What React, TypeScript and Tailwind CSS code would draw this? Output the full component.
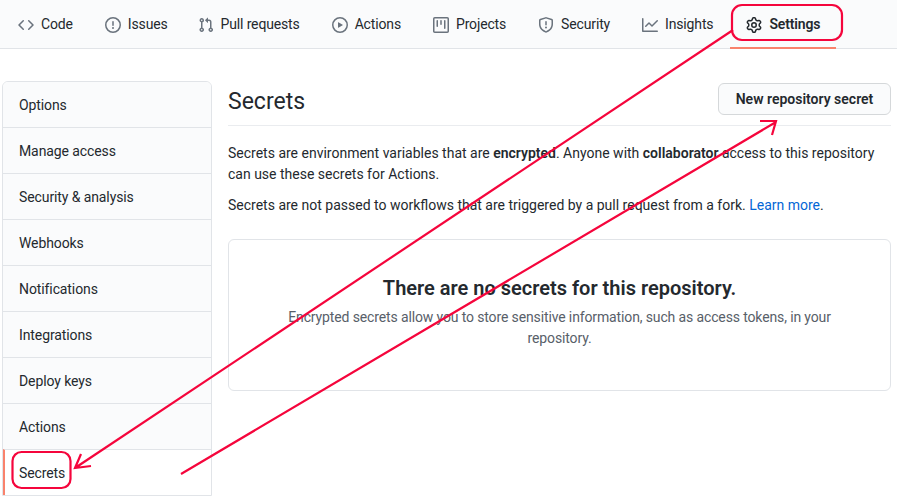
import React from 'react';

const paths: Record<string, string> = {
  code: 'M4.72 3.22a.75.75 0 011.06 1.06L2.06 8l3.72 3.72a.75.75 0 11-1.06 1.06L.47 8.53a.75.75 0 010-1.06l4.25-4.25zm6.56 0a.75.75 0 10-1.06 1.06L13.94 8l-3.72 3.72a.75.75 0 101.06 1.06l4.25-4.25a.75.75 0 000-1.06l-4.25-4.25z',
  issue: 'M8 1.5a6.5 6.5 0 100 13 6.5 6.5 0 000-13zM0 8a8 8 0 1116 0A8 8 0 010 8zm9 3a1 1 0 11-2 0 1 1 0 012 0zm-.25-6.25a.75.75 0 00-1.5 0v3.5a.75.75 0 001.5 0v-3.5z',
  pr: 'M7.177 3.073L9.573.677A.25.25 0 0110 .854v4.792a.25.25 0 01-.427.177L7.177 3.427a.25.25 0 010-.354zM3.75 2.5a.75.75 0 100 1.5.75.75 0 000-1.5zm-2.25.75a2.25 2.25 0 113 2.122v5.256a2.251 2.251 0 11-1.5 0V5.372A2.25 2.25 0 011.5 3.25zM11 2.5h-1V4h1a1 1 0 011 1v5.628a2.251 2.251 0 101.5 0V5A2.5 2.5 0 0011 2.5zm1 10.25a.75.75 0 111.5 0 .75.75 0 01-1.5 0zM3.75 12a.75.75 0 100 1.5.75.75 0 000-1.5z',
  play: 'M1.5 8a6.5 6.5 0 1113 0 6.5 6.5 0 01-13 0zM8 0a8 8 0 100 16A8 8 0 008 0zM6.379 5.227A.25.25 0 006 5.442v5.117a.25.25 0 00.379.214l4.264-2.559a.25.25 0 000-.428L6.379 5.227z',
  project: 'M1.75 0A1.75 1.75 0 000 1.75v12.5C0 15.216.784 16 1.75 16h12.5A1.75 1.75 0 0016 14.25V1.75A1.75 1.75 0 0014.25 0H1.75zM1.5 1.75a.25.25 0 01.25-.25h12.5a.25.25 0 01.25.25v12.5a.25.25 0 01-.25.25H1.75a.25.25 0 01-.25-.25V1.75zM11.75 3a.75.75 0 00-.75.75v7.5a.75.75 0 001.5 0v-7.5a.75.75 0 00-.75-.75zm-8.25.75a.75.75 0 011.5 0v5.5a.75.75 0 01-1.5 0v-5.5zM8 3a.75.75 0 00-.75.75v3.5a.75.75 0 001.5 0v-3.5A.75.75 0 008 3z',
  shield: 'M7.467.133a1.75 1.75 0 011.066 0l5.25 1.68A1.75 1.75 0 0115 3.48V7c0 1.566-.32 3.182-1.303 4.682-.983 1.498-2.585 2.813-5.032 3.855a1.7 1.7 0 01-1.33 0c-2.447-1.042-4.049-2.357-5.032-3.855C1.32 10.182 1 8.566 1 7V3.48a1.75 1.75 0 011.217-1.667l5.25-1.68zm.61 1.429a.25.25 0 00-.153 0l-5.25 1.68a.25.25 0 00-.174.238V7c0 1.358.275 2.666 1.057 3.86.784 1.194 2.121 2.34 4.366 3.297a.2.2 0 00.154 0c2.245-.956 3.582-2.104 4.366-3.298C13.225 9.666 13.5 8.36 13.5 7V3.48a.25.25 0 00-.174-.237l-5.25-1.68zM9 10.5a1 1 0 11-2 0 1 1 0 012 0zm-.25-5.75a.75.75 0 10-1.5 0v3a.75.75 0 001.5 0v-3z',
  graph: 'M1.5 1.75a.75.75 0 00-1.5 0v12.5c0 .414.336.75.75.75h14.5a.75.75 0 000-1.5H1.5V1.75zm14.28 2.53a.75.75 0 00-1.06-1.06L10 7.94 7.53 5.47a.75.75 0 00-1.06 0L3.22 8.72a.75.75 0 001.06 1.06L7 7.06l2.47 2.47a.75.75 0 001.06 0l5.25-5.25z',
  gear: 'M7.429 1.525a6.593 6.593 0 011.142 0c.036.003.108.036.137.146l.289 1.105c.147.56.55.967.997 1.189.174.086.341.183.501.29.417.278.97.423 1.53.27l1.102-.303c.11-.03.175.016.195.046.219.31.41.641.573.989.014.031.022.11-.059.19l-.815.806c-.411.406-.562.957-.53 1.456a4.588 4.588 0 010 .582c-.032.499.119 1.05.53 1.456l.815.806c.08.08.073.159.059.19a6.494 6.494 0 01-.573.99c-.02.029-.086.074-.195.045l-1.103-.303c-.559-.153-1.112-.008-1.529.27-.16.107-.327.204-.5.29-.449.222-.851.628-.998 1.189l-.289 1.105c-.029.11-.101.143-.137.146a6.613 6.613 0 01-1.142 0c-.036-.003-.108-.037-.137-.146l-.289-1.105c-.147-.56-.55-.967-.997-1.189a4.502 4.502 0 01-.501-.29c-.417-.278-.97-.423-1.53-.27l-1.102.303c-.11.03-.175-.016-.195-.046a6.492 6.492 0 01-.573-.989c-.014-.031-.022-.11.059-.19l.815-.806c.411-.406.562-.957.53-1.456a4.587 4.587 0 010-.582c.032-.499-.119-1.05-.53-1.456l-.815-.806c-.08-.08-.073-.159-.059-.19a6.44 6.44 0 01.573-.99c.02-.029.086-.075.195-.045l1.103.303c.559.153 1.112.008 1.529-.27.16-.107.327-.204.5-.29.449-.222.851-.628.998-1.189l.289-1.105c.029-.11.101-.143.137-.146zM8 0c-.236 0-.47.01-.701.03-.743.065-1.29.615-1.458 1.261l-.29 1.106c-.017.066-.078.158-.211.224a5.994 5.994 0 00-.668.386c-.123.082-.233.09-.3.071L3.27 2.776c-.644-.177-1.392.02-1.82.63a7.977 7.977 0 00-.704 1.217c-.315.675-.111 1.422.363 1.891l.815.806c.05.048.098.147.088.294a6.084 6.084 0 000 .772c.01.147-.038.246-.088.294l-.815.806c-.474.469-.678 1.216-.363 1.891.2.428.436.835.704 1.218.428.609 1.176.806 1.82.63l1.103-.303c.066-.019.176-.011.299.071.213.143.436.272.668.386.133.066.194.158.212.224l.289 1.106c.169.646.715 1.196 1.458 1.26a8.094 8.094 0 001.402 0c.743-.064 1.29-.614 1.458-1.26l.29-1.106c.017-.066.078-.158.211-.224a5.98 5.98 0 00.668-.386c.123-.082.233-.09.3-.071l1.102.302c.644.177 1.392-.02 1.82-.63.268-.382.505-.789.704-1.217.315-.675.111-1.422-.364-1.891l-.814-.806c-.05-.048-.098-.147-.088-.294a6.1 6.1 0 000-.772c-.01-.147.039-.246.088-.294l.814-.806c.475-.469.679-1.216.364-1.891a7.992 7.992 0 00-.704-1.218c-.428-.609-1.176-.806-1.82-.63l-1.103.303c-.066.019-.176.011-.299-.071a5.991 5.991 0 00-.668-.386c-.133-.066-.194-.158-.212-.224L10.16 1.29C9.99.645 9.444.095 8.701.031A8.094 8.094 0 008 0zm1.5 8a1.5 1.5 0 11-3 0 1.5 1.5 0 013 0zM11 8a3 3 0 11-6 0 3 3 0 016 0z',
};

const tabs = [
  { label: 'Code', icon: 'code' },
  { label: 'Issues', icon: 'issue', extra: '-mr-[2px]' },
  { label: 'Pull requests', icon: 'pr' },
  { label: 'Actions', icon: 'play' },
  { label: 'Projects', icon: 'project' },
  { label: 'Security', icon: 'shield' },
  { label: 'Insights', icon: 'graph', extra: 'mr-[1px]' },
  { label: 'Settings', icon: 'gear', active: true },
];

const menu = ['Options', 'Manage access', 'Security & analysis', 'Webhooks', 'Notifications', 'Integrations', 'Deploy keys', 'Actions', 'Secrets'];

const Octicon = ({ name, active }: { name: string; active?: boolean }) => (
  <svg viewBox="0 0 16 16" className={`w-4 h-4 mr-[7px] ${active ? 'fill-[#24292e]' : 'fill-[#6a737d]'}`}>
    <path fillRule="evenodd" d={paths[name]} />
  </svg>
);

export default function App() {
  return (
    <div className="relative w-[897px] h-[499px] overflow-hidden bg-white text-[14px] text-[#24292e] font-['Roboto','Open_Sans',sans-serif]">
      {/* repo tabs */}
      <nav className="flex h-[49px] pl-[2px] bg-[#fafbfc] border-b border-[#e1e4e8]">
        {tabs.map((t) => (
          <a
            key={t.label}
            className={`flex items-center h-[49px] px-4 pt-[2px] whitespace-nowrap tracking-[-0.15px] border-b-2 ${t.extra ?? ''} ${t.active ? 'font-semibold border-[#f9826c]' : 'border-transparent'}`}
          >
            <Octicon name={t.icon} active={t.active} />
            {t.label}
          </a>
        ))}
      </nav>

      <div className="flex gap-4 pt-8 pl-[2px] pr-[6px]">
        {/* sidebar */}
        <aside className="w-[210px] shrink-0 self-start border border-[#e1e4e8] rounded-t-md overflow-hidden">
          {menu.map((item, i) => (
            <div
              key={item}
              className={`flex items-center px-4 pt-[2px] tracking-[-0.1px] ${i > 0 ? 'h-[46px] border-t border-[#e1e4e8]' : 'h-[45px]'} ${item === 'Secrets' ? 'bg-white border-l-2 border-l-[#f9826c] pl-[14px]' : 'bg-[#fafbfc]'}`}
            >
              {item}
            </div>
          ))}
        </aside>

        {/* main */}
        <main className="flex-1 min-w-0">
          <div className="flex items-start justify-between h-[45px] border-b border-[#eaecef]">
            <h2 className="text-[23px] leading-[30px] mt-[6px]">Secrets</h2>
            <button className="h-8 w-[173px] mt-[2px] rounded-md border border-[#d5d8da] bg-[#fafbfc] font-semibold">
              New repository secret
            </button>
          </div>
          <p className="mt-[17px] leading-[21px]">
            Secrets are environment variables that are <strong className="font-semibold">encrypted</strong>. Anyone with <strong className="font-semibold">collaborator</strong> access to this repository can use these secrets for Actions.
          </p>
          <p className="mt-[10px] leading-[21px]">
            Secrets are not passed to workflows that are triggered by a pull request from a fork. <a className="text-[#0366d6]">Learn more</a>.
          </p>
          <div className="mt-[23px] h-[152px] rounded-md border border-[#e1e4e8] flex flex-col items-center pt-[33px] px-10 text-center">
            <h3 className="text-[20px] leading-[30px] font-semibold">There are no secrets for this repository.</h3>
            <p className="mt-[4px] leading-[21px] tracking-[-0.13px] text-[#586069]">
              Encrypted secrets allow you to store sensitive information, such as access tokens, in your repository.
            </p>
          </div>
        </main>
      </div>

      {/* red annotations drawn on the screenshot */}
      <svg className="absolute inset-0 pointer-events-none" width="897" height="499" fill="none" stroke="#f5053c" strokeWidth="2.2">
        <rect x="732" y="5" width="110" height="35" rx="10" />
        <rect x="12.5" y="452" width="58" height="36" rx="9" />
        <path d="M733 30L75 468M81 454L75 468L91 466" />
        <path d="M181 474L776 122M760 121L776 121L772 135" />
      </svg>
    </div>
  );
}
